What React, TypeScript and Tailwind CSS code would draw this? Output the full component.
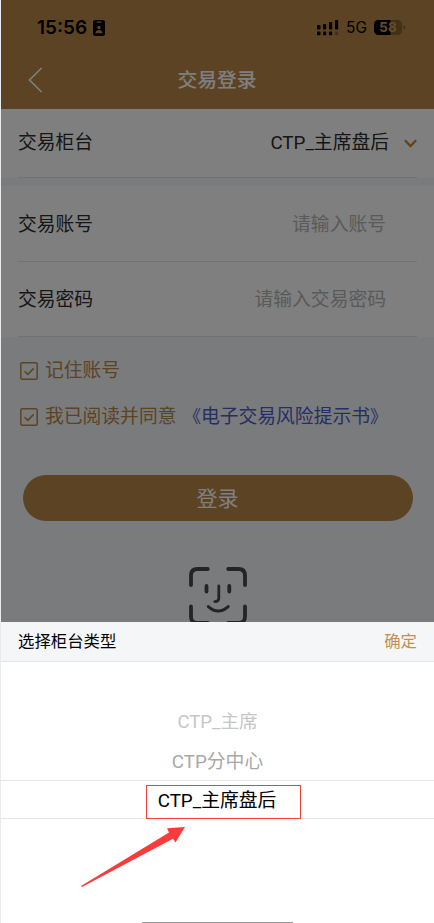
import type { ReactNode } from 'react';

function StatusBar() {
	return (
		<div className="flex h-[50px] items-end justify-between pl-9 pr-[28px] pb-[11px] font-['Inter',sans-serif]">
			<div className="flex items-center gap-[6px]">
				<span className="w-[50px] whitespace-nowrap pt-px text-[19px] font-semibold leading-[22px] text-black">15:56</span>
				<svg className="h-4 w-3" viewBox="0 0 12 16">
					<rect width="12" height="16" rx="2.2" fill="#000" />
					<rect x="3.5" y="1.6" width="5" height="1.1" rx=".5" fill="#b98748" />
					<circle cx="6" cy="7.6" r="1.7" fill="#b98748" />
					<path d="M2.5 13.2c0-2.2 1.5-3.2 3.5-3.2s3.5 1 3.5 3.2z" fill="#b98748" />
				</svg>
			</div>
			<div className="mb-[3px] flex items-center">
				<svg className="h-4 w-[22px]" viewBox="0 0 22 16">
					<g fill="#000">
						<rect x="0" y="5" width="3.5" height="4.5" rx=".8" />
						<rect x="6" y="4" width="3.2" height="5.5" rx=".8" />
						<rect x="12" y="2" width="3.2" height="7.5" rx=".8" />
						<rect x="18" y="0" width="3.2" height="9.5" rx=".8" />
						<rect x="0" y="11.5" width="3.5" height="3.7" rx=".8" />
						<rect x="6" y="11.5" width="3.2" height="3.7" rx=".8" />
						<rect x="12" y="11.5" width="3.2" height="3.7" rx=".8" />
					</g>
					<rect x="18" y="11.5" width="3.2" height="3.7" rx=".8" fill="#85602f" />
				</svg>
				<span className="ml-[7px] w-[21px] whitespace-nowrap pt-px text-[15.5px] leading-4 text-black">5G</span>
				<svg className="ml-[7px] h-[15px] w-8" viewBox="0 0 32 15">
					<defs>
						<clipPath id="level">
							<rect width="16.5" height="15" />
						</clipPath>
					</defs>
					<rect width="28" height="15" rx="4.5" fill="#85602f" />
					<rect width="28" height="15" rx="4.5" fill="#000" clipPath="url(#level)" />
					<path d="M29.5 5v5c1.2-.5 2-1.4 2-2.5s-.8-2-2-2.5z" fill="#85602f" />
					<text x="14" y="12.3" textAnchor="middle" fontSize="13.5" fontWeight="700" fill="#c99a5c">58</text>
				</svg>
			</div>
		</div>
	);
}

function Row({ label, className, children }: { label: string; className: string; children: ReactNode }) {
	return (
		<div className="bg-white px-[17px]">
			<div className={`flex items-center justify-between border-b border-[#e4e4e4] ${className}`}>
				<span className="text-[#2c2c2c]">{label}</span>
				{children}
			</div>
		</div>
	);
}

function Checkbox() {
	return (
		<svg className="h-[18px] w-[18px]" viewBox="0 0 18 18" fill="none" stroke="#b98748">
			<rect x=".8" y=".8" width="16.4" height="16.4" rx="1.5" strokeWidth="1.5" />
			<path d="M4.5 9.2l3.3 3.2 5.9-6" strokeWidth="1.5" />
		</svg>
	);
}

function FaceIcon() {
	return (
		<svg className="h-[58px] w-[58px]" viewBox="0 0 58 58" fill="none" stroke="#484848" strokeLinecap="round">
			<path
				d="M2 18V8.5Q2 2 8.5 2H18.8M39.2 2H49.5Q56 2 56 8.5V18M56 39.5V49.5Q56 56 49.5 56H39.2M18.8 56H8.5Q2 56 2 49.5V39.5"
				strokeWidth="3.8"
			/>
			<path d="M17.5 19v5.5M40.3 19v5.5" strokeWidth="3.8" />
			<path d="M29.8 19v12.2Q29.8 34.6 25.8 34.6" strokeWidth="2.8" />
			<path d="M19.3 39.6Q29.2 48.4 39.2 39.6" strokeWidth="3" />
		</svg>
	);
}

function Picker() {
	return (
		<div className="absolute inset-x-0 bottom-0 flex h-[301px] flex-col bg-white">
			<div className="flex h-10 items-center justify-between border-b border-[#e4e5e7] bg-[#f5f6f8] px-[17px] text-[16.4px] text-black">
				<span>选择柜台类型</span>
				<span className="text-[#c29149]">确定</span>
			</div>
			<div className="flex flex-col pt-10 text-center">
				<div className="flex h-[39px] items-center justify-center pt-px text-[18.6px] text-[#c6c6c6]">CTP_主席</div>
				<div className="flex h-[39px] items-center justify-center pt-[2px] text-[18.8px] text-[#a8a8a8]">CTP分中心</div>
				<div className="flex h-[39px] items-center justify-center border-y border-[#e6e6e6] pr-px pt-[3px] text-black">
					CTP_主席盘后
				</div>
			</div>
			{/* Highlight around the selected counter */}
			<div className="absolute left-[145px] top-[163px] h-[34px] w-[155px] border border-[#f43f3c]" />
			<svg className="absolute left-[80px] top-[204px] h-[62px] w-[106px]" viewBox="0 0 106 62">
				<path d="M104 1L86 2.3L88 6.6L0 60L1 61L92 12.8L94.5 16.5Z" fill="#fb3b3b" />
			</svg>
			<div className="absolute bottom-0 left-[141px] h-px w-[151px] bg-[#999]" />
		</div>
	);
}

export default function App() {
	return (
		<div className="h-[923px] w-[434px] border-l border-[#e9ecee] font-['Roboto','Noto_Sans_CJK_SC',sans-serif] text-[18.8px] leading-6">
			<div className="relative h-full overflow-hidden bg-[#f5f7f9]">
				<header className="h-[109px] bg-[#b98748]">
					<StatusBar />
					<div className="grid h-[59px] grid-cols-[1fr_auto_1fr] items-center">
						<svg className="ml-[27px] h-[26px] w-[15px]" viewBox="0 0 15 26" fill="none" stroke="#fff" strokeWidth="1.6">
							<path d="M13.6 1L1.5 13L13.6 25" />
						</svg>
						<h1 className="pr-px pt-[2px] text-[19.8px] font-medium text-white">交易登录</h1>
					</div>
				</header>

				<Row label="交易柜台" className="h-[69px]">
					<div className="flex items-center gap-[15px] text-[#2c2c2c]">
						<span>CTP_主席盘后</span>
						<svg className="h-[9px] w-[13px]" viewBox="0 0 13 9" fill="none" stroke="#c28a30" strokeWidth="2.3">
							<path d="M.9 1.2L6.5 7L12.1 1.2" />
						</svg>
					</div>
				</Row>
				<div className="h-2" />
				<Row label="交易账号" className="h-[76px] pt-[3px]">
					<span className="pr-[31px] text-[#b4b4b4]">请输入账号</span>
				</Row>
				<Row label="交易密码" className="h-[75px] pt-[2px]">
					<span className="pr-[31px] text-[#b4b4b4]">请输入交易密码</span>
				</Row>

				<div className="flex flex-col gap-[22px] pl-[19px] pt-[22px] text-[#b98748]">
					<div className="flex items-center gap-[7px]">
						<Checkbox />
						<span>记住账号</span>
					</div>
					<div className="flex items-center gap-[7px]">
						<Checkbox />
						<span>我已阅读并同意</span>
						<span className="flex text-[#4f5cc8]">
							<span className="text-[17.5px]">《</span>
							<span>电子交易风险提示书</span>
							<span className="text-[17.5px]">》</span>
						</span>
					</div>
				</div>

				<button className="ml-[21.5px] mt-[46px] flex h-[46px] w-[390px] items-center justify-center rounded-full bg-[#b98748] pt-px text-[21px] text-white">
					登录
				</button>
				<div className="mt-[46px] flex justify-center">
					<FaceIcon />
				</div>

				<div className="absolute inset-0 bg-black/50" />
				<Picker />
			</div>
		</div>
	);
}
